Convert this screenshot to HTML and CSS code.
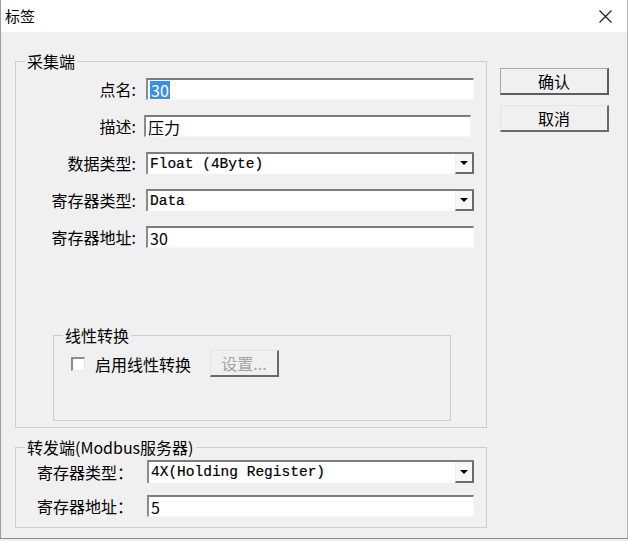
FILE: index.html
```html
<!DOCTYPE html>
<html lang="zh-CN">
<head>
<meta charset="UTF-8">
<title>标签</title>
<link rel="stylesheet" href="styles.css">
</head>
<body>

<div class="window">
  <!-- Title bar -->
  <div class="titlebar">
    <span class="title">标签</span>
    <svg class="close" width="13" height="13" viewBox="0 0 13 13">
      <path d="M0.5 0.5 L12.5 12.5 M12.5 0.5 L0.5 12.5" stroke="#1a1a1a" stroke-width="1.1" fill="none"/>
    </svg>
  </div>

  <div class="dialog">
    <div class="main">
      <!-- 采集端 -->
      <fieldset class="group group-collect">
        <legend>采集端</legend>
        <div class="form-grid">
          <label class="lbl">点名:</label>
          <div class="field"><span class="sel">30</span></div>

          <label class="lbl">描述:</label>
          <div class="field field-short">压力</div>

          <label class="lbl">数据类型:</label>
          <div class="combo">
            <span class="combo-value">Float (4Byte)</span>
            <span class="combo-btn"><i class="arrow"></i></span>
          </div>

          <label class="lbl">寄存器类型:</label>
          <div class="combo">
            <span class="combo-value">Data</span>
            <span class="combo-btn"><i class="arrow"></i></span>
          </div>

          <label class="lbl">寄存器地址:</label>
          <div class="field">30</div>
        </div>

        <!-- 线性转换 -->
        <fieldset class="group group-linear">
          <legend>线性转换</legend>
          <div class="linear-row">
            <span class="checkbox"></span>
            <span class="check-label">启用线性转换</span>
            <button class="btn btn-small" disabled>设置...</button>
          </div>
        </fieldset>
      </fieldset>

      <!-- 转发端 -->
      <fieldset class="group group-forward">
        <legend>转发端(Modbus服务器)</legend>
        <div class="form-grid form-grid-left">
          <label class="lbl">寄存器类型：</label>
          <div class="combo">
            <span class="combo-value">4X(Holding Register)</span>
            <span class="combo-btn"><i class="arrow"></i></span>
          </div>

          <label class="lbl">寄存器地址：</label>
          <div class="field">5</div>
        </div>
      </fieldset>
    </div>

    <div class="actions">
      <button class="btn btn-default">确认</button>
      <button class="btn">取消</button>
    </div>
  </div>
</div>

</body>
</html>
```

FILE: styles.css
```css
/* Classic Windows dialog */
* {
box-sizing: border-box;
}

body {
margin: 0;
background-color: #f0f0f0;
font-family: "Noto Sans CJK SC", sans-serif;
font-size: 16px;
color: #000;
}

.window {
width: 628px;
height: 539px;
background-color: #f0f0f0;
border-left: 1px solid #9c9c9c;
border-right: 1px solid #b4b4b4;
border-bottom: 1px solid #8a8a8a;
}

.titlebar {
height: 32px;
background-color: #fff;
display: flex;
align-items: center;
justify-content: space-between;
padding: 0 15px 0 4px;
}

.title {
font-size: 15px;
line-height: 20px;
}

.dialog {
display: flex;
padding: 19px 0 0 14px;
}

.main {
width: 472px;
}

/* Group boxes */
.group {
margin: 0;
padding: 0;
border: 1px solid #cdcdcd;
min-width: 0;
}

.group legend {
margin-left: 9px;
padding: 0 2px;
height: 20px;
line-height: 20px;
font-size: 16px;
}

.group-collect {
padding-bottom: 6px;
}

.group-linear {
width: 398px;
margin: 77px 0 0 37px;
padding-bottom: 43px;
}

.group-forward {
margin-top: 9px;
padding-bottom: 10px;
}

/* Form rows */
.form-grid {
display: grid;
grid-template-columns: 125px 328px;
grid-auto-rows: 22px;
column-gap: 5px;
row-gap: 15px;
padding-top: 7px;
align-items: center;
}

.lbl {
text-align: right;
padding-right: 5px;
line-height: 22px;
white-space: nowrap;
}

.form-grid-left {
grid-template-columns: 131px 327px;
grid-auto-rows: auto;
column-gap: 0;
row-gap: 12px;
padding-top: 3px;
}

.form-grid-left .lbl {
text-align: left;
padding-left: 21px;
}

.field {
height: 22px;
background-color: #fff;
border-style: solid;
border-width: 2px 1px 1px 2px;
border-color: #7c7c7c #f7f7f7 #f7f7f7 #8c8c8c;
padding-left: 2px;
display: flex;
align-items: center;
font-size: 16px;
line-height: 18px;
}

.field-short {
width: 327px;
margin-left: -2px;
}

.sel {
background-color: #3a8ee6;
color: #fff;
height: 18px;
padding: 0 1px;
}

.combo {
height: 23px;
display: flex;
background-color: #fff;
border-style: solid;
border-width: 2px 0 0 2px;
border-color: #7c7c7c #f7f7f7 #f7f7f7 #8c8c8c;
}

.form-grid .combo {
height: 22px;
}

.form-grid-left .combo {
height: 23px;
}

.combo-value {
flex: 1;
padding-left: 2px;
font-family: "Liberation Mono", monospace;
font-size: 14.5px;
line-height: 20px;
white-space: nowrap;
overflow: hidden;
-webkit-text-stroke: 0.2px #000;
}

.combo-btn {
width: 19px;
background-color: #f6f6f6;
border-right: 2px solid #6a6a6a;
border-bottom: 2px solid #6a6a6a;
border-left: 1px solid #f0f0f0;
display: flex;
align-items: center;
justify-content: center;
}

.arrow {
width: 0;
height: 0;
border-top: 4px solid #000;
border-left: 4px solid transparent;
border-right: 4px solid transparent;
}

/* Linear conversion */
.linear-row {
display: flex;
align-items: center;
padding: 5px 0 0 17px;
}

.checkbox {
width: 14px;
height: 14px;
background-color: #fff;
border-style: solid;
border-width: 2px 1px 1px 2px;
border-color: #8c8c8c #e6e6e6 #e6e6e6 #8c8c8c;
}

.check-label {
margin-left: 10px;
}

/* Buttons */
.actions {
display: flex;
flex-direction: column;
gap: 10px;
margin: 17px 0 0 13px;
}

.btn {
width: 109px;
height: 27px;
padding: 0;
background-color: #f0f0f0;
border-style: solid;
border-width: 1px 2px 2px 1px;
border-color: #e4e4e4 #6a6a6a #6a6a6a #e4e4e4;
font-family: "Noto Sans CJK SC", sans-serif;
font-size: 16px;
color: #000;
}

.btn-default {
border-color: #a8a8a8 #5c5c5c #5c5c5c #a8a8a8;
}

.btn-small {
width: 69px;
margin-left: 19px;
color: #a3a3a3;
}
```
